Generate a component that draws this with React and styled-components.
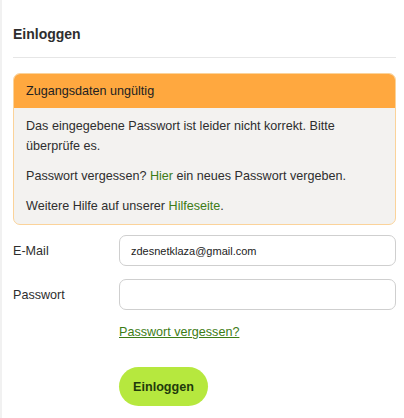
import React from 'react';
import styled, {createGlobalStyle} from 'styled-components';

const GlobalStyle = createGlobalStyle`
  html, body {
    margin: 0;
    padding: 0;
    background: #f1f1f1;
  }
  body {
    font-family: "Liberation Sans", Arial, sans-serif;
    color: #333;
  }
`;

const Page = styled.div`
  margin-left: 2px;
  min-height: 418px;
  background: #fff;
  padding: 0 8px 0 11px;
  box-sizing: border-box;
`;

const Title = styled.h2`
  margin: 0;
  padding: 25px 0 14px;
  font-size: 14px;
  font-weight: bold;
  line-height: 18px;
  color: #2e2e2e;
  border-bottom: 1px solid #e6e6e6;
`;

const Alert = styled.div`
  margin-top: 15px;
  border: 1px solid #fbd39a;
  border-radius: 7px;
  overflow: hidden;
  background: #f3f2f0;
`;

const AlertHead = styled.div`
  background: #ffa83f;
  padding: 8px 12px;
  font-size: 12.6px;
  line-height: 18px;
  color: #222;
`;

const AlertBody = styled.div`
  padding: 8px 12px 8px;
  font-size: 12.6px;
  line-height: 20px;
  color: #2e2e2e;

  p {
    margin: 0 0 10px;
  }
  p:last-child {
    margin-bottom: 0;
  }
`;

const Green = styled.a`
  color: #3d7c16;
  text-decoration: ${p => (p.$underline ? 'underline' : 'none')};
  cursor: pointer;
`;

const Form = styled.form`
  margin-top: 10px;
  display: grid;
  grid-template-columns: 106px 1fr;
  row-gap: 13px;
  align-items: center;
`;

const Label = styled.label`
  font-size: 12.6px;
  color: #2e2e2e;
`;

const Input = styled.input`
  box-sizing: border-box;
  width: 100%;
  height: 31px;
  border: 1px solid #cfcfcf;
  border-radius: 7px;
  padding: 0 11px;
  font-family: "Liberation Sans", Arial, sans-serif;
  font-size: 11px;
  color: #222;
  background: #fff;
  outline: none;
`;

const LinkRow = styled.div`
  grid-column: 2;
  font-size: 12.6px;
  line-height: 18px;
`;

const ButtonRow = styled.div`
  grid-column: 2;
  padding-top: 13px;
`;

const Button = styled.button`
  height: 39px;
  width: 89px;
  border: none;
  border-radius: 20px;
  background: #b6e83e;
  color: #1f3a0c;
  font-family: "Liberation Sans", Arial, sans-serif;
  font-size: 12.6px;
  font-weight: bold;
  cursor: pointer;
`;

export default function App() {
  return (
    <>
      <GlobalStyle/>
      <Page>
        <Title>Einloggen</Title>
        <Alert>
          <AlertHead>Zugangsdaten ungültig</AlertHead>
          <AlertBody>
            <p>Das eingegebene Passwort ist leider nicht korrekt. Bitte überprüfe es.</p>
            <p>Passwort vergessen? <Green>Hier</Green> ein neues Passwort vergeben.</p>
            <p>Weitere Hilfe auf unserer <Green>Hilfeseite</Green>.</p>
          </AlertBody>
        </Alert>
        <Form onSubmit={e => e.preventDefault()}>
          <Label>E-Mail</Label>
          <Input type="text" defaultValue="zdesnetklaza@gmail.com"/>
          <Label>Passwort</Label>
          <Input type="password"/>
          <LinkRow>
            <Green $underline>Passwort vergessen?</Green>
          </LinkRow>
          <ButtonRow>
            <Button type="submit">Einloggen</Button>
          </ButtonRow>
        </Form>
      </Page>
    </>
  );
}
